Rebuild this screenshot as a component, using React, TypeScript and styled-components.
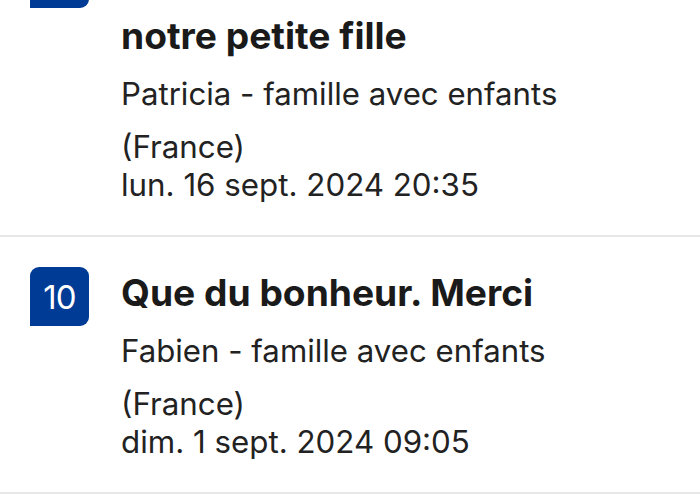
import React from 'react';
import styled, { createGlobalStyle } from 'styled-components';

const GlobalStyle = createGlobalStyle`
  html, body { margin: 0; padding: 0; background: #fff; }
  body {
    font-family: Inter, "Liberation Sans", Arial, sans-serif;
    color: #1a1a1a;
    -webkit-font-smoothing: antialiased;
  }
`;

interface Review {
  score: number;
  title: string;
  author: string;
  country: string;
  date: string;
}

// first title wraps on two lines, only the second one is on screen
const REVIEWS: Review[] = [
  { score: 10, title: 'Un séjour inoubliable avec\nnotre petite fille', author: 'Patricia - famille avec enfants', country: '(France)', date: 'lun. 16 sept. 2024 20:35' },
  { score: 10, title: 'Que du bonheur. Merci', author: 'Fabien - famille avec enfants', country: '(France)', date: 'dim. 1 sept. 2024 09:05' },
];

// the list is scrolled: first card is cut at the top of the viewport
const List = styled.div<{ $scroll: number }>`
  margin-top: ${({ $scroll }) => -$scroll}px;
  width: 700px;
  overflow: hidden;
`;

const Item = styled.div`
  display: grid;
  grid-template-columns: 59px 1fr;
  align-items: start;
  column-gap: 32px;
  padding: 30px 30px 31px 30px;
  border-bottom: 2px solid #e7e7e7;
`;

const Score = styled.div`
  width: 59px;
  height: 59px;
  border-radius: 9px 9px 9px 0;
  background: #003b95;
  color: #fff;
  font-size: 33px;
  font-weight: 400;
  display: flex;
  align-items: center;
  justify-content: center;
  letter-spacing: -0.8px;
`;

const Body = styled.div`
  display: flex;
  flex-direction: column;
`;

const Title = styled.div`
  font-size: 37.2px;
  font-weight: 700;
  line-height: 61px;
  margin-top: -5px;
  white-space: pre-line;
  color: #1a1a1a;
`;

const Author = styled.div`
  font-size: 31.2px;
  line-height: 40px;
  margin-top: 8px;
  color: #222;
`;

const Meta = styled.div`
  font-size: 31.3px;
  line-height: 38px;
  margin-top: 14px;
  color: #222;
`;

export default function App() {
  return (
    <>
      <GlobalStyle />
      <List $scroll={81}>
        {REVIEWS.map(r => (
          <Item key={r.date}>
            <Score>{r.score}</Score>
            <Body>
              <Title>{r.title}</Title>
              <Author>{r.author}</Author>
              <Meta>
                {r.country}
                <br />
                {r.date}
              </Meta>
            </Body>
          </Item>
        ))}
      </List>
    </>
  );
}
